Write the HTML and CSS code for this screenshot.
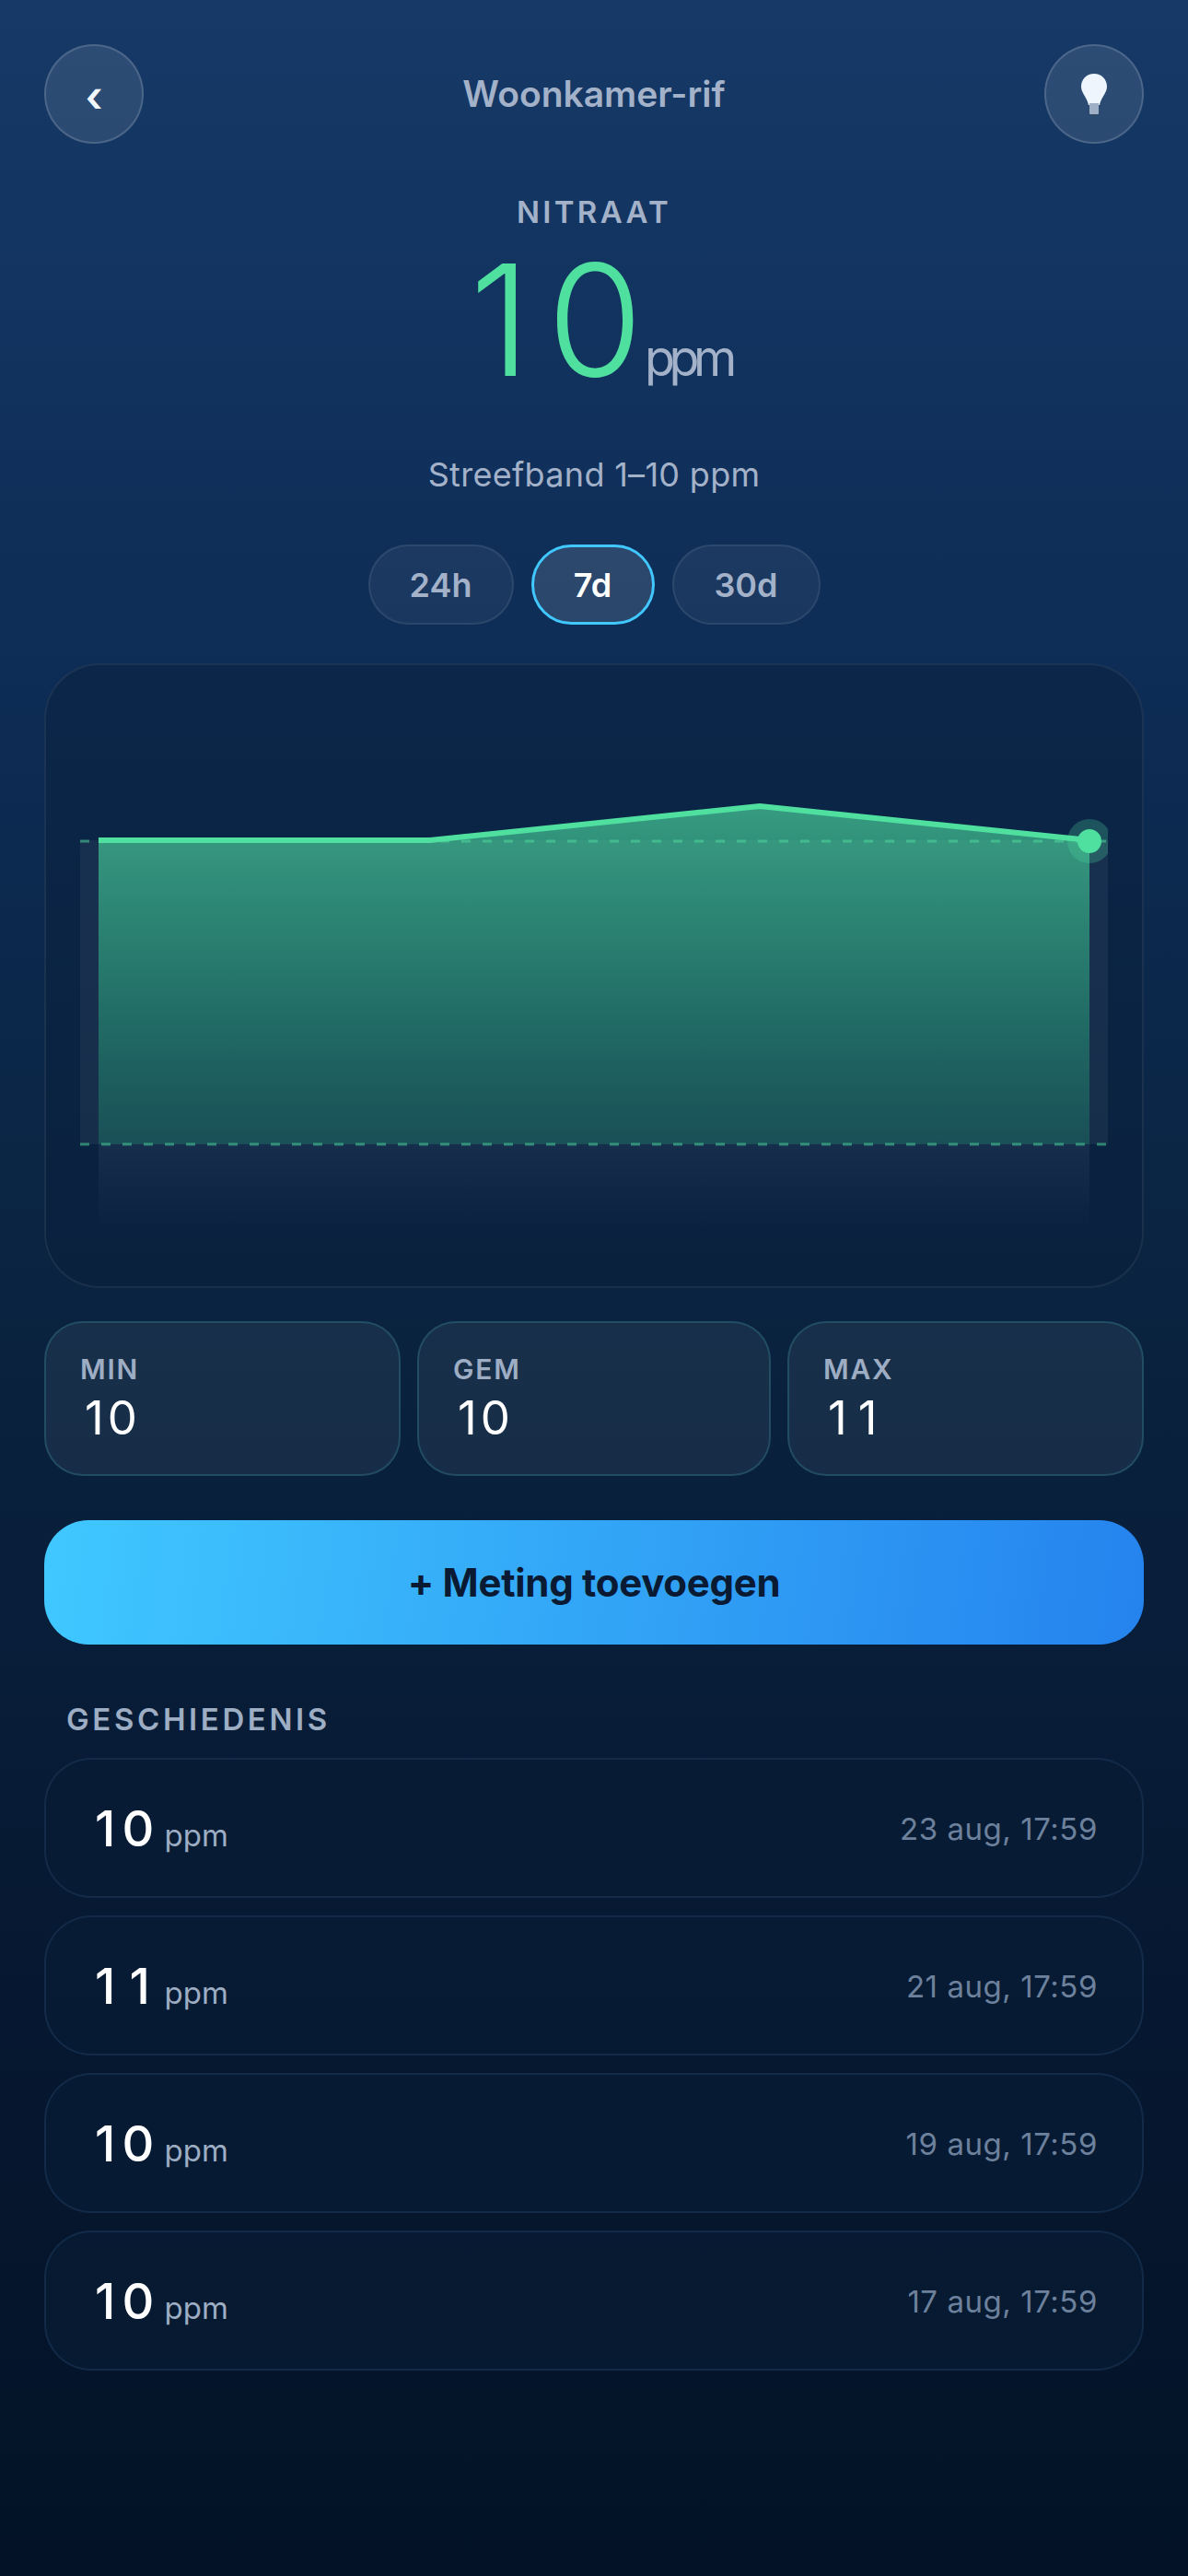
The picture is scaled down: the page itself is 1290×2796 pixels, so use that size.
FILE: index.html
```html
<!DOCTYPE html>
<html lang="nl">
<head>
<meta charset="utf-8">
<title>Woonkamer-rif</title>
<link rel="stylesheet" href="styles.css">
</head>
<body>
<main class="screen">
  <header class="topbar">
    <button class="round-btn chevron">‹</button>
    <h1 class="title">Woonkamer-rif</h1>
    <button class="round-btn">
      <svg class="bulb" width="32" height="48" viewBox="0 0 32 48">
        <path d="M16 1C8 1 2 7 2 15c0 7 6 11 8 20h12c2-9 8-13 8-20C30 7 24 1 16 1z" fill="#eef5fc"/>
        <path d="M11 33h10v11a1 1 0 0 1-1 1h-8a1 1 0 0 1-1-1z" fill="#9fb0c6"/>
        <rect x="14" y="45" width="4" height="2" fill="#33465f"/>
      </svg>
    </button>
  </header>
  <section class="hero">
    <div class="metric">NITRAAT</div>
    <div class="reading"><span class="big">10</span><span class="unit">ppm</span></div>
    <div class="target">Streefband 1–10 ppm</div>
    <div class="pills">
      <button class="pill p24">24h</button>
      <button class="pill p7 active">7d</button>
      <button class="pill p30">30d</button>
    </div>
  </section>
  <section class="chart-card">
    <svg class="chart" width="1190" height="674" viewBox="50 722 1190 674">
      <defs>
        <linearGradient id="fade" x1="0" y1="875" x2="0" y2="1335" gradientUnits="userSpaceOnUse">
          <stop offset="0" stop-color="#50e1a3" stop-opacity=".63"/>
          <stop offset=".798" stop-color="#23d287" stop-opacity=".2"/>
          <stop offset=".798" stop-color="#8fa8c8" stop-opacity=".09"/>
          <stop offset="1" stop-color="#8fa8c8" stop-opacity="0"/>
        </linearGradient>
        <clipPath id="clip"><rect x="50" y="722" width="1153" height="674"/></clipPath>
      </defs>
      <rect x="87" y="912" width="1116" height="330" fill="#fff" fill-opacity=".055"/>
      <polygon points="107,912 467,912 825,875 1183,912 1183,1335 107,1335" fill="url(#fade)"/>
      <line x1="87" y1="913" x2="1203" y2="913" class="dash"/>
      <line x1="87" y1="1242" x2="1203" y2="1242" class="dash"/>
      <polyline points="107,912 467,912 825,875 1183,912" class="trend"/>
      <g clip-path="url(#clip)">
        <circle cx="1183" cy="913" r="24" fill="#4fe0a0" fill-opacity=".25"/>
        <circle cx="1183" cy="913" r="13" fill="#4fe0a0"/>
      </g>
    </svg>
  </section>
  <section class="stats">
    <div class="stat"><div class="stat-label">MIN</div><div class="stat-value">10</div></div>
    <div class="stat"><div class="stat-label">GEM</div><div class="stat-value">10</div></div>
    <div class="stat"><div class="stat-label">MAX</div><div class="stat-value ones">11</div></div>
  </section>
  <button class="add-btn">+ Meting toevoegen</button>
  <h2 class="history-title">GESCHIEDENIS</h2>
  <section class="history">
    <div class="row"><div><span class="row-value">10</span> <span class="row-unit">ppm</span></div><div class="row-date">23 aug, 17:59</div></div>
    <div class="row"><div><span class="row-value ones">11</span> <span class="row-unit">ppm</span></div><div class="row-date">21 aug, 17:59</div></div>
    <div class="row"><div><span class="row-value">10</span> <span class="row-unit">ppm</span></div><div class="row-date">19 aug, 17:59</div></div>
    <div class="row"><div><span class="row-value">10</span> <span class="row-unit">ppm</span></div><div class="row-date">17 aug, 17:59</div></div>
  </section>
</main>
</body>
</html>
```
FILE: styles.css
```css
* { box-sizing: border-box; }
html, body { margin: 0; padding: 0; }
body {
  width: 1290px;
  height: 2796px;
  overflow: hidden;
  font-family: Inter, "Liberation Sans", sans-serif;
  background: linear-gradient(180deg, #163967 0%, #0d2c55 27%, #0a2340 50%, #071a34 72%, #031226 100%);
}
.screen { padding: 48px 48px 0; display: flex; flex-direction: column; }
button { font-family: inherit; }
.topbar { display: flex; align-items: center; justify-content: space-between; height: 108px; }
.round-btn {
  width: 108px; height: 108px; border-radius: 50%; padding: 0;
  display: flex; align-items: center; justify-content: center;
  background: rgba(255,255,255,.1); border: 2px solid rgba(255,255,255,.15);
  color: #f2f7fc;
}
.chevron { font-size: 46px; font-weight: 600; line-height: 1; padding-top: 4px; }
.bulb { display: block; margin-top: 2px; }
.title { margin: 0; font-size: 39px; font-weight: 600; color: #a3b2c9; line-height: 44px; }
.hero { display: flex; flex-direction: column; align-items: center; }
.metric { margin-top: 54px; font-size: 33px; line-height: 40px; font-weight: 600; letter-spacing: 3.3px; color: #a3b2c9; }
.reading { display: flex; align-items: baseline; margin-top: 19px; padding-left: 14px; height: 156px; line-height: 156px; }
.big { font-size: 168px; font-weight: 300; color: #4fe0a0; }
.big::first-letter { margin-right: 18px; }
.unit { font-size: 54px; font-weight: 400; letter-spacing: -6.5px; color: #a3b2c9; margin-left: 2px; }
.target { margin-top: 68px; font-size: 36px; line-height: 44px; letter-spacing: .3px; color: #a3b2c9; }
.pills { display: flex; gap: 19px; margin-top: 54px; }
.pill {
  height: 87px; border-radius: 44px; padding: 0;
  font-size: 36px; font-weight: 600; color: #a3b2c9;
  background: rgba(255,255,255,.05); border: 2px solid rgba(255,255,255,.08);
}
.p24 { width: 158px; }
.p7 { width: 134px; }
.p30 { width: 161px; }
.pill.active { background: rgba(255,255,255,.12); border: 3px solid #40c8ff; color: #fff; }
.chart-card {
  margin-top: 42px; height: 678px; border-radius: 60px;
  border: 2px solid rgba(255,255,255,.07);
  background: rgba(10,31,60,.5);
  overflow: hidden;
}
.chart { display: block; }
.dash { stroke: #4fe0a0; stroke-opacity: .5; stroke-width: 3; stroke-dasharray: 10 13; fill: none; }
.trend { stroke: #4fe0a0; stroke-width: 6; fill: none; stroke-linejoin: round; }
.stats { display: grid; grid-template-columns: 387px 384px 387px; gap: 18px; margin-top: 36px; }
.stat {
  height: 168px; border-radius: 42px; padding: 32px 37px 0;
  background: rgba(255,255,255,.06); border: 2px solid rgba(60,150,160,.3);
}
.stat-label { font-size: 30px; line-height: 36px; font-weight: 600; letter-spacing: 1.8px; color: #9dadc3; }
.stat-value { margin: 4px 0 0 5px; font-size: 51px; line-height: 62px; font-weight: 400; letter-spacing: 4px; color: #fff; }
.stat-value.ones { letter-spacing: 12px; }
.add-btn {
  display: block; width: 100%; margin-top: 48px; height: 135px; border: 0; border-radius: 48px;
  background: linear-gradient(98deg, #40c8ff 0%, #2583ee 100%);
  font-size: 42px; font-weight: 700; letter-spacing: -.3px; color: #0a1a33;
}
.history-title { margin: 61px 0 0 24px; font-size: 33px; line-height: 40px; font-weight: 600; letter-spacing: 3.6px; color: #9dadc3; }
.history { display: flex; flex-direction: column; gap: 19px; margin-top: 22px; }
.row {
  height: 152px; border-radius: 51px; padding: 0 48px 0 53px;
  display: flex; align-items: center; justify-content: space-between;
  background: rgba(8,27,52,.8); border: 2px solid rgba(90,150,200,.14);
}
.row-value { display: inline-block; width: 71px; font-size: 54px; font-weight: 500; letter-spacing: 7px; color: #fff; }
.row-value.ones { letter-spacing: 15px; }
.row-unit { font-size: 33px; color: #9dadc3; }
.row-date { padding-top: 2px; font-size: 33px; letter-spacing: .55px; color: #6d819c; }
```
